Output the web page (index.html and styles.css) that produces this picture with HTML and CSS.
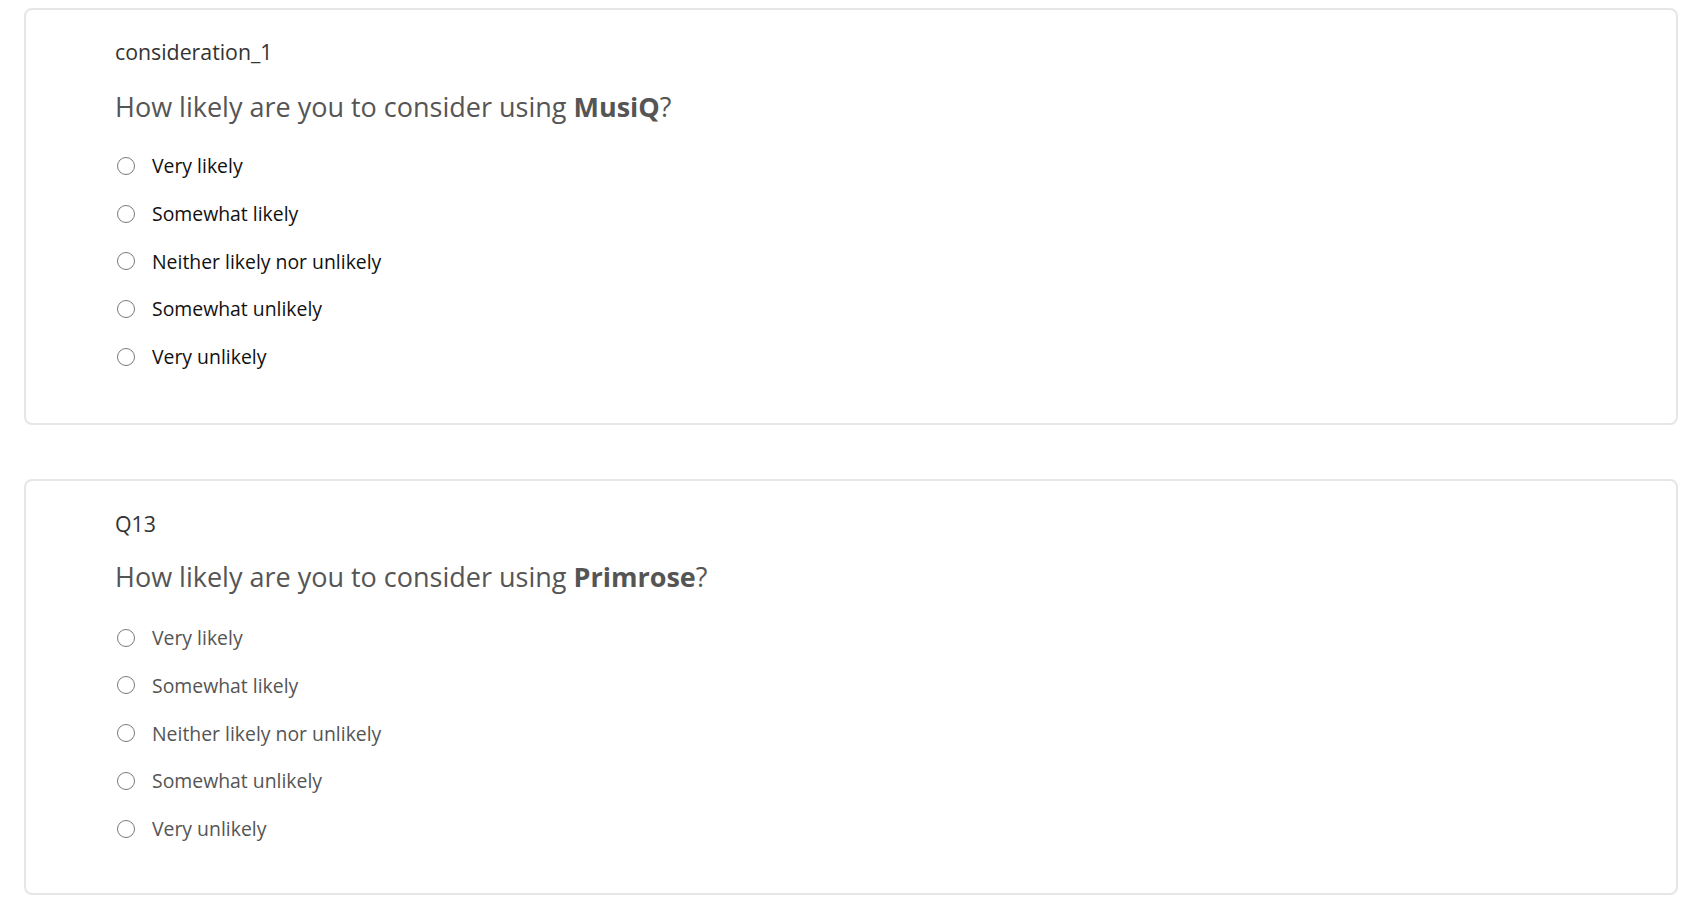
FILE: index.html
```html
<!DOCTYPE html>
<html lang="en">
<head>
<meta charset="utf-8">
<title>Survey questions</title>
<link rel="stylesheet" href="styles.css">
</head>
<body>
<main class="page">
  <section class="card">
    <div class="qid">consideration_1</div>
    <h2 class="qtext">How likely are you to consider using <strong>MusiQ</strong>?</h2>
    <ul class="choices">
      <li class="choice"><span class="radio"></span><span>Very likely</span></li>
      <li class="choice"><span class="radio"></span><span>Somewhat likely</span></li>
      <li class="choice"><span class="radio"></span><span>Neither likely nor unlikely</span></li>
      <li class="choice"><span class="radio"></span><span>Somewhat unlikely</span></li>
      <li class="choice"><span class="radio"></span><span>Very unlikely</span></li>
    </ul>
  </section>
  <section class="card card-muted">
    <div class="qid">Q13</div>
    <h2 class="qtext">How likely are you to consider using <strong>Primrose</strong>?</h2>
    <ul class="choices">
      <li class="choice"><span class="radio"></span><span>Very likely</span></li>
      <li class="choice"><span class="radio"></span><span>Somewhat likely</span></li>
      <li class="choice"><span class="radio"></span><span>Neither likely nor unlikely</span></li>
      <li class="choice"><span class="radio"></span><span>Somewhat unlikely</span></li>
      <li class="choice"><span class="radio"></span><span>Very unlikely</span></li>
    </ul>
  </section>
</main>
</body>
</html>
```

FILE: styles.css
```css
html, body {
  margin: 0;
  padding: 0;
  background: #ffffff;
}

body {
  font-family: "Open Sans", "Noto Sans", sans-serif;
}

.page {
  display: flex;
  flex-direction: column;
  gap: 54px;
  padding: 8px 22px 0 24px;
}

.card {
  border: 2px solid #e6e6e6;
  border-radius: 8px;
  padding: 30px 0 43px 89px;
  display: flex;
  flex-direction: column;
}

.card-muted {
  padding-top: 31px;
  padding-bottom: 41px;
}

.qid {
  font-size: 21.3px;
  line-height: 24px;
  color: #333333;
}

.qtext {
  margin: 27px 0 0 0;
  font-size: 27px;
  line-height: 32px;
  font-weight: 400;
  color: #555555;
}

.card-muted .qtext {
  margin-top: 25px;
}

.qtext strong {
  font-weight: 700;
}

.choices {
  list-style: none;
  margin: 19px 0 0 0;
  padding: 0 0 0 2px;
}

.card-muted .choices {
  margin-top: 20.5px;
}

.choice {
  display: flex;
  align-items: center;
  gap: 17px;
  height: 47.7px;
  font-size: 19.4px;
  color: #111111;
}

.card-muted .choice {
  color: #555555;
}

.radio {
  box-sizing: border-box;
  width: 18px;
  height: 18px;
  border: 1.5px solid #7a7a7a;
  border-radius: 50%;
  flex: none;
}
```
